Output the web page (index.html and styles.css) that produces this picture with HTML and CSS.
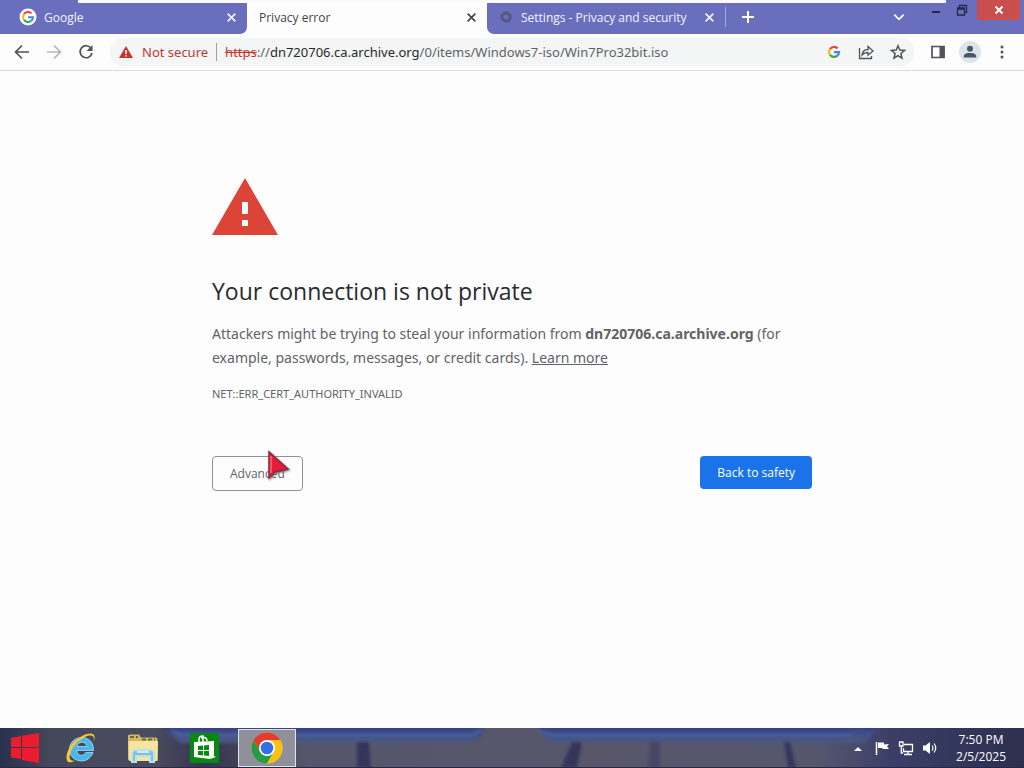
FILE: index.html
```html
<!DOCTYPE html>
<html lang="en">
<head>
<meta charset="utf-8">
<title>Privacy error</title>
<link rel="stylesheet" href="styles.css">
</head>
<body>
<header class="browser">
  <div class="strip">
    <div class="tab tab-first">
      <svg class="favicon" viewBox="0 0 18 18"><circle cx="9" cy="9" r="8.5" fill="#fff"/><g fill="none" stroke-width="2"><path d="M5 6.1A5 5 0 0 1 12.6 5.4" stroke="#ea4335"/><path d="M5 11.9a5 5 0 0 1 0-5.8" stroke="#fbbc05"/><path d="M12.3 12.7A5 5 0 0 1 5 11.9" stroke="#34a853"/><path d="M9 9.2h5a5 5 0 0 1-1.7 3.5" stroke="#4285f4"/></g></svg>
      <span class="tab-title">Google</span>
      <button class="close" aria-label="Close Google"><svg viewBox="0 0 10 10"><path d="M1.5 1.5l7 7m0-7l-7 7"/></svg></button>
    </div>
    <div class="tab tab-active">
      <span class="tab-title">Privacy error</span>
      <button class="close" aria-label="Close Privacy error"><svg viewBox="0 0 10 10"><path d="M1.5 1.5l7 7m0-7l-7 7"/></svg></button>
    </div>
    <div class="strip-rest">
      <div class="tab tab-settings">
        <svg class="gear" viewBox="0 0 16 16"><circle cx="8" cy="8" r="4.5" fill="none" stroke="#55597f" stroke-width="3"/><circle cx="8" cy="8" r="6" fill="none" stroke="#55597f" stroke-width="1.5" stroke-dasharray="2.4 2.3"/></svg>
        <span class="tab-title">Settings - Privacy and security</span>
        <button class="close" aria-label="Close Settings"><svg viewBox="0 0 10 10"><path d="M1.5 1.5l7 7m0-7l-7 7"/></svg></button>
      </div>
      <button class="new-tab" aria-label="New tab"><svg viewBox="0 0 14 14"><path d="M7 1v12M1 7h12"/></svg></button>
      <button class="search-tabs" aria-label="Search tabs"><svg viewBox="0 0 12 12"><path d="M2 4l4 4 4-4" stroke-width="1.5"/></svg></button>
      <div class="window-buttons">
        <button aria-label="Minimize"><svg viewBox="0 0 12 12"><path d="M2 8h8" stroke-width="2"/></svg></button>
        <button aria-label="Restore"><svg viewBox="0 0 12 12"><path d="M3.5 3.5V1.5h7v7h-2M1.5 4h7v7h-7zM1.5 5h7" stroke-width="1.3"/></svg></button>
        <button class="window-close" aria-label="Close window"><svg viewBox="0 0 12 12"><path d="M2.5 2.5l7 7m0-7l-7 7" stroke-width="2"/></svg></button>
      </div>
    </div>
    <div class="strip-edge"></div>
  </div>
  <nav class="toolbar">
    <button class="nav-button" aria-label="Back"><svg viewBox="0 0 16 16"><path d="M15 8H2M8 1.5L1.5 8 8 14.5"/></svg></button>
    <button class="nav-button nav-off" aria-label="Forward"><svg viewBox="0 0 16 16"><path d="M1 8h13M8 1.5L14.5 8 8 14.5"/></svg></button>
    <button class="nav-button" aria-label="Reload"><svg viewBox="0 0 16 16"><path d="M13.2 4.5A6 6 0 1 0 14 9"/><path d="M14.5 1v6h-6z" fill="#505357" stroke="none"/></svg></button>
    <div class="address">
      <svg class="warn" viewBox="0 0 16 14"><path d="M8 1l7 12H1z" fill="#c5352b"/><path d="M8 5v4M8 10v1.5" stroke="#fff" stroke-width="1.5"/></svg>
      <span class="not-secure">Not secure</span>
      <div class="url" role="textbox" aria-label="Address"><span class="scheme">https</span><span>://</span><span class="host">dn720706.ca.archive.org</span><span>/0/items/Windows7-iso/Win7Pro32bit.iso</span></div>
      <button aria-label="Search with Google"><svg viewBox="1 1 16 16"><g fill="none" stroke-width="2.2"><path d="M5 6.1A5 5 0 0 1 12.6 5.4" stroke="#ea4335"/><path d="M5 11.9a5 5 0 0 1 0-5.8" stroke="#fbbc05"/><path d="M12.3 12.7A5 5 0 0 1 5 11.9" stroke="#34a853"/><path d="M9 9.2h5a5 5 0 0 1-1.7 3.5" stroke="#4285f4"/></g></svg></button>
      <button aria-label="Share"><svg viewBox="0 0 16 16"><path d="M1.5 4v10.5h12V12M4 11c.5-4 2.5-5.5 6-5.5V2.5L15 7l-5 4.2V8.5c-3 0-4.5.8-6 2.5z" stroke-width="1.3"/></svg></button>
      <button aria-label="Bookmark"><svg viewBox="0 0 16 16"><path d="M8 1.8l1.8 4.3 4.7.4-3.6 3 1.1 4.6L8 11.7l-4 2.4 1.1-4.6-3.6-3 4.700-.4z" stroke-width="1.5"/></svg></button>
    </div>
    <div class="actions">
      <button aria-label="Side panel"><svg viewBox="0 0 16 16"><path d="M2 2.5h12v11H2z" stroke-width="1.7"/><path d="M9.5 2h5v12h-5z" fill="#505357" stroke="none"/></svg></button>
      <button class="profile" aria-label="Profile"><svg viewBox="0 0 16 16"><g fill="#4a5763" stroke="none"><circle cx="8" cy="4.8" r="3"/><path d="M1.8 13.5v-1.3C2 9.5 5.5 9 8 9s6 .5 6.2 3.2v1.3z"/></g></svg></button>
      <button aria-label="Menu"><svg viewBox="0 0 16 16"><g fill="#505357" stroke="none"><circle cx="8" cy="3" r="1.5"/><circle cx="8" cy="8" r="1.5"/><circle cx="8" cy="13" r="1.5"/></g></svg></button>
    </div>
  </nav>
</header>

<main class="page">
  <section class="interstitial">
    <svg class="alert" viewBox="0 0 66 57"><path d="M33 0l33 57H0z" fill="#db4437"/><path d="M30 24h6v12h-6zM30 42h6v6h-6z" fill="#fff"/></svg>
    <h1>Your connection is not private</h1>
    <p class="message">Attackers might be trying to steal your information from <strong>dn720706.ca.archive.org</strong> (for example, passwords, messages, or credit cards). <a href="#">Learn more</a></p>
    <p class="code">NET::ERR_CERT_AUTHORITY_INVALID</p>
    <div class="choices">
      <div class="advanced-wrap">
        <button class="advanced">Advanced</button>
        <svg class="cursor" viewBox="0 0 24 32"><path d="M3 2v26l6-6 13-3z" fill="#e91b3c" stroke="#8e2a38" stroke-width="1.5"/><path d="M5 6v17" stroke="#f66a80" stroke-width="1.5"/></svg>
      </div>
      <button class="primary">Back to safety</button>
    </div>
  </section>
</main>

<footer class="taskbar">
  <svg class="wallpaper" viewBox="0 0 1024 40" preserveAspectRatio="none">
    <defs>
      <linearGradient id="base" x1="0" x2="1" y1="0" y2="0"><stop offset="0" stop-color="#27304d"/><stop offset=".05" stop-color="#45475a"/><stop offset=".15" stop-color="#4a4b5e"/><stop offset=".2" stop-color="#35364e"/><stop offset=".3" stop-color="#55566a"/><stop offset=".6" stop-color="#59566a"/><stop offset=".8" stop-color="#55566d"/><stop offset=".87" stop-color="#3b3f68"/><stop offset="1" stop-color="#2c2f4e"/></linearGradient>
      <linearGradient id="glow" x1="0" x2="0" y1="0" y2="1"><stop offset="0" stop-color="#303680"/><stop offset=".45" stop-color="#3f4f8c"/><stop offset="1" stop-color="#4a5880"/></linearGradient>
      <filter id="soft"><feGaussianBlur stdDeviation="1.5"/></filter>
    </defs>
    <path d="M0 0h1024v40H0z" fill="url(#base)"/>
    <g filter="url(#soft)">
      <path d="M160-3h325l-5 14-20 4H180z" fill="url(#glow)"/>
      <path d="M536-3h344l-15 18H550z" fill="url(#glow)"/>
      <path d="M357 14h12l2 26h-14zM572 14h10l-5 26h-16zM784 14h6l6 26h-8z" fill="#34365a"/>
      <path d="M650 14h10v26h-12z" fill="#464763"/>
      <path d="M172 3l10 4h290l10-6M538 2l14 5h300" fill="none" stroke="#4c65a2" stroke-width="2"/>
    </g>
    <path d="M0 39h1024v1H0z" fill="#242747"/>
  </svg>
  <div class="launchers">
    <button aria-label="Start"><svg viewBox="0 0 32 32"><path d="M3 6l10-2v11H3zM14 3.7L31 1v14H14zM3 16h10v11L3 25.500zM14 16h17v15l-17-3z" fill="#ed1c2c"/></svg></button>
    <button aria-label="Internet Explorer"><svg viewBox="0 0 32 32"><path d="M28 20.5C26 25.5 22 29 16.5 29 9.5 29 4.5 24 4.5 17.5S9.5 5.5 16.7 5.5c7.5 0 12 5 11.8 13H11.800c.3 3 2 4.800 4.600 4.800 2.200 0 3.500-1.300 4.300-2.800zM12 14.500h9.500c-.3-3-2.200-4.300-4.700-4.300S12.500 12 12 14.500z" fill="#4ab6ec" stroke="#b6e8fb" stroke-width=".7"/><path d="M29 9c2.500-7.500-2.500-9.500-12-5C7 9 0 20 1.800 28c.8 3 4 3 8 .7C5 29.500 4 26.500 5 22.500 7 15 13 8.500 20 5c6-2.500 9.500-2 9 4z" fill="#f3c738"/></svg></button>
    <button aria-label="File Explorer"><svg viewBox="0 0 32 32"><path d="M1 4q0-1.500 1.500-1.500H12l2 3h15q1.500 0 1.500 1.500v21H1z" fill="#d6b65c"/><path d="M3 5h8m4 2.500h13" stroke="#5d6952" stroke-width="2" stroke-dasharray="4 2"/><path d="M1.500 9h28.500q1.500 0 1 1.500L30.500 29H2z" fill="#f6e59c"/><path d="M5 30v-8q0-4 4-4h14q4 0 4 4v8h-4v-6H9v6z" fill="#83bfdf" stroke="#b6e2f3"/><path d="M10 20h12" stroke="#cceef9" stroke-width="2"/></svg></button>
    <button aria-label="Store"><svg viewBox="0 0 32 32"><path d="M1 1h29v30H1z" fill="#078810"/><path d="M5 10l20-1v15l2 1-6 2L5 25z" fill="#fff"/><path d="M10 10V7q0-3 4-3v6m-2-4q6-2 6 3" fill="none" stroke="#fff" stroke-width="1.5"/><path d="M9 14l5-.5v4.500H9zM15 13.400l5-.5V18h-5zM9 19h5v4.500L9 23zM15 19h5v5l-5-.5z" fill="#078810"/></svg></button>
    <button class="running" aria-label="Chrome"><svg viewBox="0 0 32 32"><circle cx="16" cy="16" r="15.5" fill="#fbc116"/><path d="M2.600 8.200A15.500 15.500 0 0 1 29.400 8.200H16L9.200 19.900z" fill="#e33b2e"/><path d="M2.600 8.200A15.500 15.500 0 0 0 16 31.500l6.800-11.600H9.300z" fill="#249a4a"/><path d="M29.400 8.200A15.500 15.500 0 0 1 16 31.500l6.800-11.600L16 8.200z" fill="#fbc116"/><circle cx="16" cy="16" r="8" fill="#fff"/><circle cx="16" cy="16" r="6.300" fill="#316fe4"/></svg></button>
  </div>
  <div class="tray">
    <button aria-label="Show hidden icons"><svg class="tray-up" viewBox="0 0 8 5"><path d="M0 5l4-4 4 4z" fill="#fff"/></svg></button>
    <button aria-label="Action center"><svg viewBox="0 0 16 16"><path d="M2.500 2v13" stroke="#fff" stroke-width="1.5"/><path d="M4 2.500h6v2l5-.5-2 2.500 2 2.500H9L8 8H4z" fill="#fff"/></svg></button>
    <button aria-label="Network"><svg viewBox="0 0 16 16"><path d="M6 4.500h8.500v7H5.500V8M10 11.500v3M6 14.500h8M1.500 2h3.500v4H1.500zM3.300 6v7H5" fill="none" stroke="#fff" stroke-width="1.3"/></svg></button>
    <button aria-label="Volume"><svg viewBox="0 0 16 16"><path d="M1 5.500h2.500L8 2v12l-4.500-3.500H1z" fill="#fff"/><path d="M10 5.500q2 2.500 0 5M12 3.500q3.500 4.500 0 9" fill="none" stroke="#fff" stroke-width="1.2"/></svg></button>
    <div class="clock"><time>7:50 PM</time><time>2/5/2025</time></div>
  </div>
</footer>
</body>
</html>
```

FILE: styles.css
```css
* { box-sizing: border-box; }

body {
  margin: 0;
  min-height: 100vh;
  display: flex;
  flex-direction: column;
  background: #fdfdfd;
  color: #5f6368;
  font-family: "Open Sans", "Noto Sans", sans-serif;
  font-size: 12px;
}

button {
  margin: 0;
  padding: 0;
  border: 0;
  background: none;
  font: inherit;
  color: inherit;
}

svg { display: block; flex: none; }

button svg {
  width: 16px;
  height: 16px;
  fill: none;
  stroke: #505357;
  stroke-width: 2;
}

.strip {
  position: relative;
  display: flex;
  height: 34px;
  background: #fdfdfe;
}

.strip-edge {
  position: absolute;
  top: 0;
  left: 78px;
  right: 78px;
  height: 3px;
  background: #fbfbfe;
}

.tab {
  display: flex;
  align-items: center;
  height: 34px;
  padding-right: 10px;
  color: #f4f4ff;
}

.tab-title { flex: 1; white-space: nowrap; }

.tab .close svg {
  width: 11px;
  height: 11px;
  stroke: #f4f4ff;
  stroke-width: 1.5;
}

.tab-first {
  flex: 0 1 247px;
  gap: 7px;
  padding-left: 19px;
  background: #6a6fbd;
  border-bottom-right-radius: 7px;
}

.favicon { width: 18px; height: 18px; }

.tab-active {
  flex: 0 1 240px;
  padding-left: 12px;
  color: #414449;
}

.tab-active .close svg { stroke: #414449; }

.strip-rest {
  flex: 1;
  display: flex;
  align-items: center;
  background: #6a6fbd;
  border-bottom-left-radius: 7px;
}

.tab-settings {
  flex: 0 1 238px;
  gap: 8px;
  padding-left: 12px;
}

.gear { width: 14px; height: 14px; }

.new-tab {
  margin-right: auto;
  padding-left: 15px;
  border-left: 1px solid #a3a7dc;
}

.new-tab svg, .search-tabs svg {
  width: 14px;
  height: 14px;
  margin: 3px 0;
  stroke: #fff;
}

.search-tabs { margin-right: 17px; }

.window-buttons {
  align-self: flex-start;
  display: flex;
}

.window-buttons button {
  display: grid;
  place-items: center;
  width: 26px;
  height: 20px;
}

.window-buttons svg { width: 12px; height: 12px; stroke: #25294f; }
.window-buttons .window-close { width: 43px; margin: 0 4px 0 2px; background: #c94f4e; }
.window-buttons .window-close svg { stroke: #fff; }

.toolbar {
  display: flex;
  align-items: center;
  height: 37px;
  padding: 0 14px;
  gap: 16px;
  border-bottom: 1px solid #dadce0;
  background: #fdfdfd;
}

.nav-button svg { stroke-width: 1.7; }
.nav-off svg { stroke: #b4b6b9; }

.address {
  flex: 1;
  display: flex;
  align-items: center;
  height: 28px;
  padding: 0 8px;
  gap: 16px;
  border-radius: 14px;
  background: #f4f5f5;
  font-family: "Noto Sans", "Open Sans", sans-serif;
  font-size: 13px;
}

.warn { width: 16px; height: 14px; }

.not-secure {
  padding-right: 8px;
  margin: 0 -8px;
  border-right: 1px solid #9ea1a5;
  color: #bd3a32;
  white-space: nowrap;
  line-height: 18px;
}

.url {
  flex: 1;
  min-width: 0;
  overflow: hidden;
  white-space: nowrap;
}

.scheme { color: #c5352b; text-decoration: line-through; }
.host { color: #26292d; }

.actions {
  display: flex;
  align-items: center;
  gap: 13px;
}

.profile {
  display: grid;
  place-items: center;
  width: 22px;
  height: 22px;
  border-radius: 50%;
  background: #dce3e9;
}

.page { flex: 1; padding: 107px 24px 24px; }

.interstitial {
  max-width: 600px;
  margin: 0 auto;
}

.alert { width: 66px; height: 57px; }

h1 {
  margin: 40px 0 15px;
  color: #292b2f;
  font-size: 23px;
  font-weight: 400;
  line-height: 32px;
}

.message {
  margin: 0 0 12px;
  font-family: "Noto Sans", "Open Sans", sans-serif;
  font-size: 14px;
  line-height: 24px;
}

.message a { color: inherit; }

.code {
  margin: 0;
  font-family: "Noto Sans", "Open Sans", sans-serif;
  font-size: 11px;
  line-height: 24px;
}

.choices {
  display: flex;
  flex-wrap: wrap;
  align-items: flex-start;
  justify-content: space-between;
  margin-top: 50px;
}

.advanced-wrap { position: relative; }

.advanced, .primary {
  height: 35px;
  padding: 0 17px;
  border-radius: 4px;
  font-size: 12px;
}

.advanced { border: 1px solid #8f9296; background: #fdfdfd; }
.primary { height: 33px; background: #1a73e8; color: #fff; }

.cursor {
  position: absolute;
  left: 54px;
  top: -6px;
  width: 24px;
  height: 32px;
  filter: drop-shadow(1px 1px 1px #777);
}

.taskbar {
  position: relative;
  display: flex;
  justify-content: space-between;
  height: 40px;
  color: #fff;
}

.wallpaper {
  position: absolute;
  inset: 0;
  width: 100%;
  height: 100%;
}

.launchers, .tray {
  position: relative;
  display: flex;
  align-items: center;
}

.launchers { gap: 4px; }

.launchers button {
  display: grid;
  place-items: center;
  width: 58px;
  height: 38px;
}

.launchers svg { width: 32px; height: 32px; stroke: none; }
.launchers button:first-child { width: 48px; }

.launchers .running {
  border: 1px solid #e3e4ea;
  background: #8f909a;
}

.tray { gap: 8px; padding-right: 18px; }
.tray button svg { stroke: none; }
.tray .tray-up { width: 8px; height: 5px; margin-right: 4px; }

.clock {
  display: grid;
  margin-left: 10px;
  font-size: 12px;
  line-height: 17px;
  text-align: center;
}
```
